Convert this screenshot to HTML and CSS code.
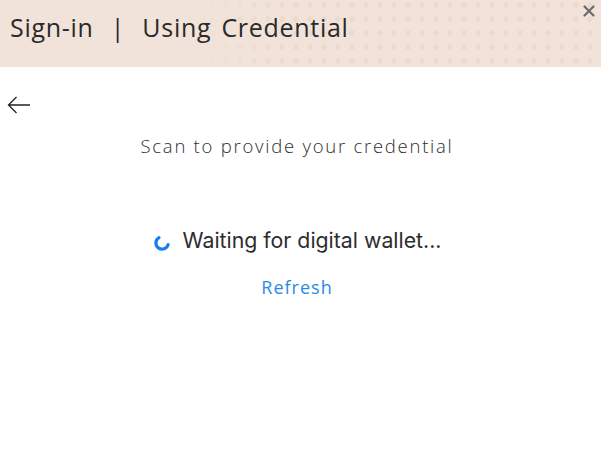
FILE: index.html
```html
<!DOCTYPE html>
<html>
<head>
<meta charset="utf-8">
<link rel="stylesheet" href="styles.css">
</head>
<body>
<div class="modal">
  <header class="header">
    <h1 class="title">Sign-in <span class="sep">|</span> Using Credential</h1>
    <button class="close" aria-label="Close">
      <svg width="12" height="12" viewBox="0 0 12 12"><path d="M1.5 1.5 L10.5 10.5 M10.5 1.5 L1.5 10.5" stroke="#6b6b6b" stroke-width="2.2" stroke-linecap="round"/></svg>
    </button>
  </header>
  <div class="back">
    <svg width="24" height="18" viewBox="0 0 24 18"><path d="M23 9 H1.5 M9.5 1 L1.5 9 L9.5 17" fill="none" stroke="#222" stroke-width="1.3"/></svg>
  </div>
  <main class="content">
    <p class="scan">Scan to provide your credential</p>
    <div class="waiting">
      <svg class="spinner" width="18" height="18" viewBox="0 0 18 18"><path d="M6 3.6 A6.2 6.2 0 1 0 15.1 10.6" fill="none" stroke="#1a7ef0" stroke-width="3.2" stroke-linecap="round"/></svg>
      <span class="waiting-text">Waiting for digital wallet...</span>
    </div>
    <a class="refresh" href="#">Refresh</a>
  </main>
</div>
</body>
</html>
```
FILE: styles.css
```css
* { box-sizing: border-box; }
html, body { margin: 0; padding: 0; background: #fff; }
body { width: 602px; height: 450px; overflow: hidden; font-family: "Open Sans", "Liberation Sans", sans-serif; }
.modal { width: 601px; }
.header {
  position: relative;
  height: 67px;
  background-color: #f1e3d9;
  background-image: radial-gradient(circle, rgba(232, 206, 190, 0.45) 2.6px, transparent 3px);
  background-size: 14px 14px;
  background-position: 275px -2px;
  display: flex;
  align-items: center;
  padding: 0 0 13px 10px;
}
.header::before {
  content: "";
  position: absolute;
  left: 0; top: 0; bottom: 0;
  width: 280px;
  background: linear-gradient(to right, #f1e3d9 70%, rgba(241,227,217,0));
}
.title {
  position: relative;
  margin: 0;
  font-size: 25px;
  font-weight: 400;
  color: #2a2a2a;
  letter-spacing: 0.7px;
  word-spacing: 3px;
}
.sep { margin: 0 7px; }
.close {
  position: absolute;
  right: 6px;
  top: 5px;
  border: 0;
  background: none;
  padding: 0;
  width: 12px;
  height: 12px;
  line-height: 0;
}
.back { padding: 0; margin: 29px 0 0 7px; height: 18px; line-height: 0; }
.content {
  width: 594px;
  display: flex;
  flex-direction: column;
  align-items: center;
}
.scan {
  margin: 19px 0 0;
  font-size: 18.5px;
  font-weight: 300;
  color: #2e2e2e;
  letter-spacing: 1.75px;
}
.waiting {
  margin-top: 69px;
  display: flex;
  align-items: center;
  gap: 12px;
}
.spinner { margin-top: 6px; }
.waiting-text {
  font-family: Inter, "Liberation Sans", sans-serif;
  font-size: 21.3px;
  color: #2d2d2d;
}
.refresh {
  margin-top: 22px;
  font-size: 18px;
  color: #2b8ae8;
  text-decoration: none;
  letter-spacing: 1px;
}
```
